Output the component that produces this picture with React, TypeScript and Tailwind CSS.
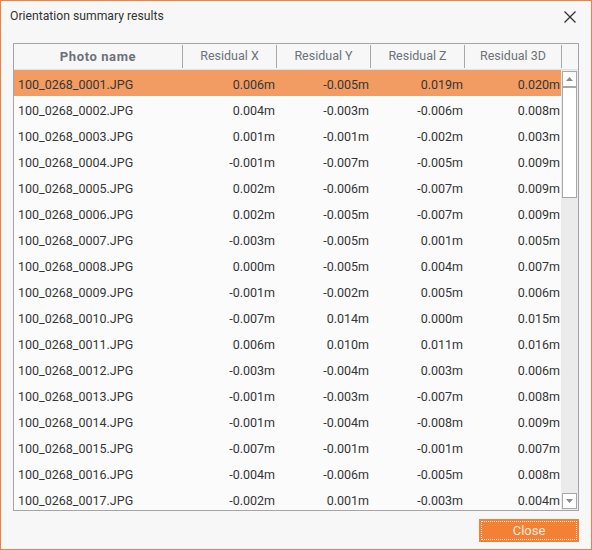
import React from "react";

const rows: [string, string, string, string, string][] = [
  ["100_0268_0001.JPG", "0.006m", "-0.005m", "0.019m", "0.020m"],
  ["100_0268_0002.JPG", "0.004m", "-0.003m", "-0.006m", "0.008m"],
  ["100_0268_0003.JPG", "0.001m", "-0.001m", "-0.002m", "0.003m"],
  ["100_0268_0004.JPG", "-0.001m", "-0.007m", "-0.005m", "0.009m"],
  ["100_0268_0005.JPG", "0.002m", "-0.006m", "-0.007m", "0.009m"],
  ["100_0268_0006.JPG", "0.002m", "-0.005m", "-0.007m", "0.009m"],
  ["100_0268_0007.JPG", "-0.003m", "-0.005m", "0.001m", "0.005m"],
  ["100_0268_0008.JPG", "0.000m", "-0.005m", "0.004m", "0.007m"],
  ["100_0268_0009.JPG", "-0.001m", "-0.002m", "0.005m", "0.006m"],
  ["100_0268_0010.JPG", "-0.007m", "0.014m", "0.000m", "0.015m"],
  ["100_0268_0011.JPG", "0.006m", "0.010m", "0.011m", "0.016m"],
  ["100_0268_0012.JPG", "-0.003m", "-0.004m", "0.003m", "0.006m"],
  ["100_0268_0013.JPG", "-0.001m", "-0.003m", "-0.007m", "0.008m"],
  ["100_0268_0014.JPG", "-0.001m", "-0.004m", "-0.008m", "0.009m"],
  ["100_0268_0015.JPG", "-0.007m", "-0.001m", "-0.001m", "0.007m"],
  ["100_0268_0016.JPG", "-0.004m", "-0.006m", "-0.005m", "0.008m"],
  ["100_0268_0017.JPG", "-0.002m", "0.001m", "-0.003m", "0.004m"],
];

function Sep() {
  return <div className="w-px h-[23px] bg-[#a8a8a8] self-center shrink-0" />;
}

export default function App() {
  return (
    <div
      className="w-[592px] h-[550px] border border-[#f0823c] bg-[#f7f7f7] flex flex-col text-[#363636]"
      style={{ fontFamily: "Roboto, 'Liberation Sans', sans-serif" }}
    >
      <div className="h-[42px] flex items-start justify-between pl-[9px] pr-[15px] pt-[7px]">
        <span className="text-[12.2px] leading-[16px] text-[#333]">Orientation summary results</span>
        <svg width="12" height="12" viewBox="0 0 12 12" className="mt-[3px]">
          <path d="M0.5 0.5 L11.5 11.5 M11.5 0.5 L0.5 11.5" stroke="#333" strokeWidth="1.3" />
        </svg>
      </div>
      <div className="ml-[12px] w-[566px] h-[468px] border border-[#a5a5a5] flex flex-col overflow-hidden">
        <div className="h-[26px] flex border-b border-[#e2e2e2] bg-[#f7f7f7] text-[12.5px] text-[#6e717a] shrink-0">
          <div className="w-[168px] flex items-center justify-center font-bold text-[13px] tracking-[0.6px]">Photo name</div>
          <Sep />
          <div className="w-[93px] flex items-center justify-center">Residual X</div>
          <Sep />
          <div className="w-[93px] flex items-center justify-center">Residual Y</div>
          <Sep />
          <div className="w-[93px] flex items-center justify-center">Residual Z</div>
          <Sep />
          <div className="w-[96px] flex items-center justify-center">Residual 3D</div>
          <Sep />
          <div className="flex-1" />
        </div>
        <div className="flex flex-1 min-h-0">
          <div className="w-[547px] flex flex-col bg-[#fbfbfb] overflow-hidden">
            {rows.map((r, i) => (
              <div
                key={r[0]}
                className={`h-[26px] shrink-0 flex items-center pt-[4px] text-[12.5px] ${i === 0 ? "bg-[#f29c64]" : ""}`}
              >
                <div className="w-[169px] pl-[4px]">{r[0]}</div>
                <div className="w-[94px] text-right pr-[2px]">{r[1]}</div>
                <div className="w-[94px] text-right pr-[2px]">{r[2]}</div>
                <div className="w-[94px] text-right pr-[2px]">{r[3]}</div>
                <div className="w-[96px] text-right pr-[1px]">{r[4]}</div>
              </div>
            ))}
          </div>
          <div className="flex-1 bg-[#ebebeb] flex flex-col items-center pt-[1px] pb-[1px]">
            <div className="w-[15px] h-[16px] border border-[#a8a8a8] bg-white flex items-center justify-center shrink-0">
              <svg width="7" height="4" viewBox="0 0 7 4">
                <path d="M0 4 L3.5 0 L7 4 Z" fill="#8a8a8a" />
              </svg>
            </div>
            <div className="w-[15px] h-[111px] border border-[#a8a8a8] bg-white shrink-0" />
            <div className="flex-1" />
            <div className="w-[15px] h-[16px] border border-[#a8a8a8] bg-white flex items-center justify-center shrink-0">
              <svg width="7" height="4" viewBox="0 0 7 4">
                <path d="M0 0 L3.5 4 L7 0 Z" fill="#8a8a8a" />
              </svg>
            </div>
          </div>
        </div>
      </div>
      <div className="flex justify-end pr-[12px] pt-[8px]">
        <button className="w-[100px] h-[23px] bg-[#f28035] p-[2px]">
          <div className="w-full h-full border border-dotted border-white flex items-center justify-center text-[13px] text-[#fde9dc]">
            Close
          </div>
        </button>
      </div>
    </div>
  );
}
